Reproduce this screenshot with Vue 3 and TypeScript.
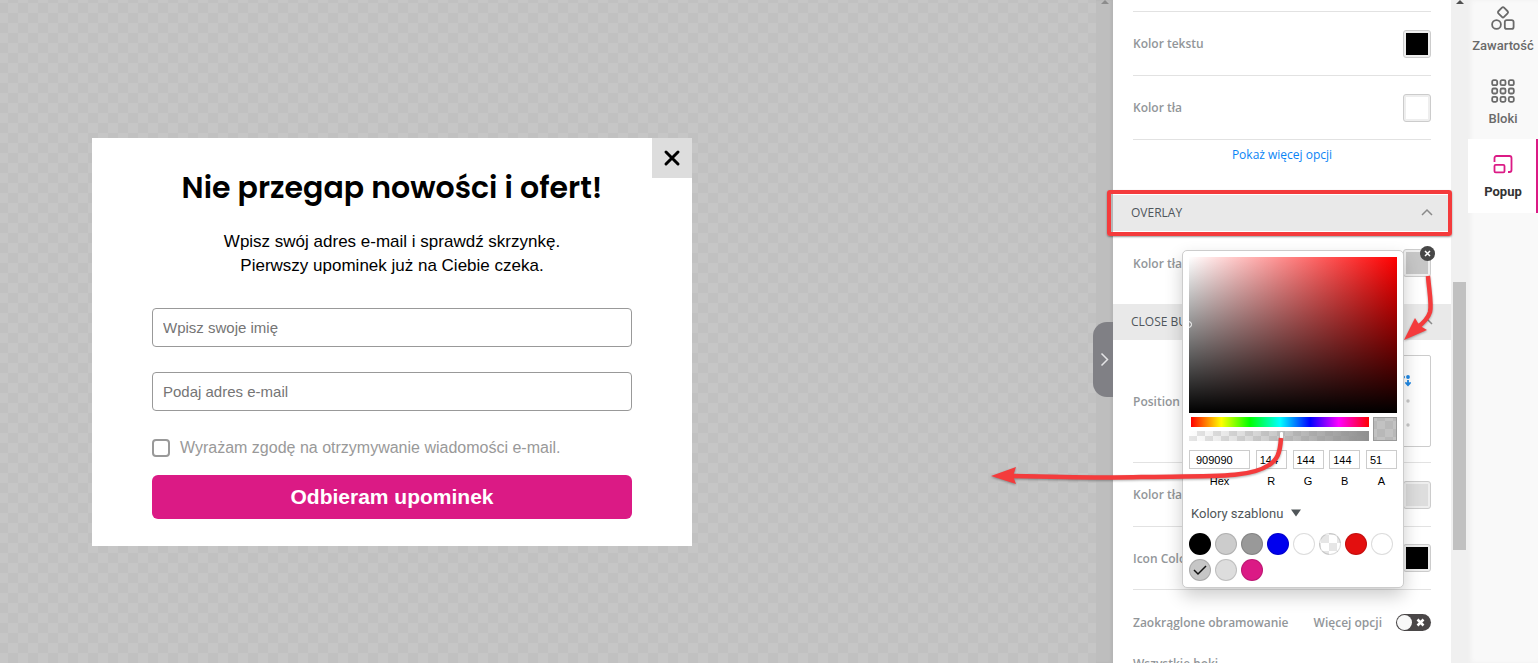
<script setup lang="ts">
import { ref } from 'vue'

interface Channel { id: string; label: string; value: string }
interface Chip { name: string; kind: string }

const tabs = ['Zawartość', 'Bloki', 'Popup']
const active = ref('Popup')
const name = ref('')
const email = ref('')
const consent = ref(false)
const rounded = ref(false)
const channels = ref<Channel[]>([
  { id: 'hex', label: 'Hex', value: '909090' },
  { id: 'r', label: 'R', value: '144' },
  { id: 'g', label: 'G', value: '144' },
  { id: 'b', label: 'B', value: '144' },
  { id: 'a', label: 'A', value: '51' },
])
const chips: Chip[] = [
  { name: 'Czarny', kind: 'black' },
  { name: 'Jasnoszary', kind: 'silver' },
  { name: 'Szary', kind: 'grey' },
  { name: 'Niebieski', kind: 'blue' },
  { name: 'Biały', kind: 'white' },
  { name: 'Przezroczysty', kind: 'clear' },
  { name: 'Czerwony', kind: 'red' },
  { name: 'Biel', kind: 'white' },
  { name: 'Wybrany', kind: 'chosen' },
  { name: 'Popielaty', kind: 'light' },
  { name: 'Różowy', kind: 'pink' },
]
</script>

<template>
  <div class="editor">
    <main class="canvas">
      <section class="popup">
        <button class="popup-close" type="button" aria-label="Zamknij">
          <svg width="18" height="18" viewBox="0 0 18 18"><path d="M3 3l12 12M15 3L3 15" stroke="#000" stroke-width="3" stroke-linecap="round" /></svg>
        </button>
        <h1>Nie przegap nowości i ofert!</h1>
        <p>Wpisz swój adres e-mail i sprawdź skrzynkę.<br />Pierwszy upominek już na Ciebie czeka.</p>
        <form @submit.prevent>
          <input v-model="name" class="field" type="text" placeholder="Wpisz swoje imię" aria-label="Wpisz swoje imię" />
          <input v-model="email" class="field" type="email" placeholder="Podaj adres e-mail" aria-label="Podaj adres e-mail" />
          <label class="consent"><input v-model="consent" type="checkbox" />Wyrażam zgodę na otrzymywanie wiadomości e-mail.</label>
          <button class="submit" type="submit">Odbieram upominek</button>
        </form>
      </section>
    </main>

    <div class="gutter">
      <svg class="gutter-up" width="8" height="4" viewBox="0 0 8 4"><path d="M0 4l4-4 4 4z" fill="#8c8c8c" /></svg>
      <button class="handle" type="button" aria-label="Zwiń panel">
        <svg width="9" height="15" viewBox="0 0 9 15"><path d="M1.500 1.500l6 6-6 6" fill="none" stroke="#e4e4e6" stroke-width="1.500" /></svg>
      </button>
    </div>

    <aside class="panel">
      <div class="row head-row"></div>
      <div class="row"><span>Kolor tekstu</span><button class="swatch" type="button" aria-label="Kolor tekstu"><i class="black"></i></button></div>
      <div class="row"><span>Kolor tła</span><button class="swatch" type="button" aria-label="Kolor tła"><i class="white"></i></button></div>
      <a class="more" href="#">Pokaż więcej opcji</a>
      <button class="section marked" type="button">
        OVERLAY
        <svg width="12" height="8" viewBox="0 0 12 8"><path d="M1 7l5-5 5 5" fill="none" stroke="#8a8a8a" stroke-width="1.500" /></svg>
      </button>
      <div class="row overlay-row">
        <span>Kolor tła</span>
        <div class="swatch-holder">
          <button class="swatch" type="button" aria-label="Kolor tła nakładki"><i class="veil"></i></button>
          <button class="clear-dot" type="button" aria-label="Usuń kolor">
            <svg width="7" height="7" viewBox="0 0 7 7"><path d="M1 1l5 5M6 1L1 6" stroke="#fff" stroke-width="1.500" /></svg>
          </button>
        </div>
      </div>
      <button class="section" type="button">
        CLOSE BUTTON
        <svg width="12" height="8" viewBox="0 0 12 8"><path d="M1 7l5-5 5 5" fill="none" stroke="#8a8a8a" stroke-width="1.500" /></svg>
      </button>
      <div class="row position-row">
        <span>Position</span>
        <div class="position-grid">
          <svg width="90" height="90" viewBox="0 0 90 90">
            <g fill="#1e88e5"><circle cx="63.500" cy="21" r="1.500" /><circle cx="68" cy="21" r="1.900" /><path d="M67.100 24h1.800v2.600l1.900-.6v1.600L68 30.500l-2.800-2.900V26l1.900.6z" /></g>
            <g fill="#c9c9c9"><circle cx="68" cy="45" r="1.700" /><circle cx="68" cy="69" r="1.700" /></g>
          </svg>
        </div>
      </div>
      <div class="row"><span>Kolor tła</span><button class="swatch" type="button" aria-label="Kolor tła przycisku"><i class="light"></i></button></div>
      <div class="row icon-row"><span>Icon Color</span><button class="swatch" type="button" aria-label="Icon Color"><i class="black"></i></button></div>
      <div class="row plain">
        <span>Zaokrąglone obramowanie</span>
        <label class="switch">
          Więcej opcji
          <input v-model="rounded" type="checkbox" />
          <b><svg width="9" height="9" viewBox="0 0 9 9"><path d="M1.500 1.500l6 6M7.500 1.500l-6 6" stroke="#fff" stroke-width="2.500" /></svg></b>
        </label>
      </div>
      <div class="sides">Wszystkie boki</div>

      <div class="picker">
        <div class="spectrum"><i class="cursor"></i></div>
        <div class="bars">
          <div class="tracks">
            <div class="hue"></div>
            <div class="alpha"><i></i></div>
          </div>
          <div class="preview"></div>
        </div>
        <div class="channels">
          <label v-for="c in channels" :key="c.id" :class="c.id"><input v-model="c.value" type="text" />{{ c.label }}</label>
        </div>
        <button class="palette-title" type="button">
          Kolory szablonu
          <svg width="10" height="8" viewBox="0 0 10 8"><path d="M0 .500h10L5 7.500z" fill="#505659" /></svg>
        </button>
        <div class="chips">
          <button v-for="c in chips" :key="c.name" type="button" :class="c.kind" :aria-label="c.name">
            <svg v-if="c.kind === 'chosen'" width="14" height="12" viewBox="0 0 14 12"><path d="M1 6l4 4 8-8" fill="none" stroke="#111" stroke-width="1.500" /></svg>
          </button>
        </div>
      </div>

      <svg class="arrows" width="468" height="260" viewBox="0 0 468 260">
        <g fill="none" stroke="#f43b3c">
          <path d="M447 36C448 50 451 64 449 72C447 79 441 84 436 88" stroke-width="4.500" />
          <path d="M300 198C299 214 296 220 288 225C269 238 235 236 160 237C120 238 70 237 32 236" stroke-width="4.500" />
        </g>
        <g fill="#f43b3c">
          <path d="M423 100L434 78L437 83L441 87L446 90Z" />
          <path d="M10 236L35 227L32 236L35 244Z" />
        </g>
      </svg>
    </aside>

    <div class="scrollbar">
      <svg width="8" height="4" viewBox="0 0 8 4"><path d="M0 4l4-4 4 4z" fill="#505050" /></svg>
      <i></i>
    </div>

    <nav class="tabs">
      <button v-for="t in tabs" :key="t" type="button" :class="{ active: t === active }" @click="active = t">
        <svg v-if="t === 'Zawartość'" width="24" height="24" viewBox="0 0 24 24" fill="none" stroke="#6a6a6a" stroke-width="1.800">
          <rect x="8" y="2.300" width="8" height="8" rx="1.500" transform="rotate(45 12 6.300)" />
          <circle cx="5.500" cy="18.500" r="4.400" /><rect x="13.800" y="14.100" width="8.800" height="8.800" rx="2" />
        </svg>
        <svg v-else-if="t === 'Bloki'" width="24" height="24" viewBox="0 0 24 24" fill="none" stroke="#6a6a6a" stroke-width="1.800">
          <template v-for="y in 3" :key="y"><rect v-for="x in 3" :key="x" :x="x * 8.300 - 7.100" :y="y * 8.300 - 7.100" width="5" height="5" rx="1.500" /></template>
        </svg>
        <svg v-else width="24" height="24" viewBox="0 0 24 24" fill="none" stroke="#db1a85" stroke-width="1.800">
          <path d="M3.500 10V6a2 2 0 0 1 2-2H18.500A2 2 0 0 1 20.500 6v12a2 2 0 0 1-2 2H17" /><rect x="3.500" y="12.800" width="10" height="7.600" rx="1.200" />
        </svg>
        {{ t }}
      </button>
    </nav>
  </div>
</template>

<style>
body { margin: 0; }
</style>

<style scoped>
* { box-sizing: border-box; }
button { border: 0; padding: 0; margin: 0; background: none; font: inherit; color: inherit; cursor: pointer; }
svg { display: block; flex: none; }
.editor { display: flex; height: 100vh; overflow: hidden; font-family: "Open Sans", "Noto Sans", sans-serif; font-size: 12px; color: #929699; background: #fff; }

.canvas { flex: 1; min-width: 0; padding: 138px 92px 0; background: repeating-conic-gradient(#c1c1c1 0 25%, #c6c6c6 0 50%) 8px 3px / 20px 20px; }
.popup { position: relative; max-width: 600px; padding: 28px 60px 27px; background: #fff; color: #000; font-family: "Liberation Sans", Arial, sans-serif; text-align: center; }
.popup-close { position: absolute; top: 0; right: 0; width: 40px; height: 40px; display: grid; place-items: center; background: #ddd; }
h1 { margin: 0 -30px 20px; font: 600 30px/44px Poppins, Inter, sans-serif; }
p { margin: 0 0 30px; font-size: 17px; line-height: 24px; }
form { display: flex; flex-direction: column; }
.field { height: 39px; margin: 0 0 25px; padding: 0 10px; border: 1px solid #999; border-radius: 4px; background: #fff; font: 15px "Liberation Sans", Arial, sans-serif; }
.field::placeholder { color: #757575; opacity: 1; }
.consent { display: flex; align-items: center; gap: 10px; height: 24px; margin-bottom: 15px; font-size: 16px; color: #999; }
.consent input { appearance: none; width: 18px; height: 18px; margin: 0; border: 2px solid #999; border-radius: 4px; background: #fff; }
.submit { height: 44px; border-radius: 6px; background: #db1a85; color: #fff; font-size: 21px; font-weight: 700; }

.gutter { position: relative; flex: none; width: 17px; background: #bebebe; box-shadow: inset -2px 0 3px #b4b4b4; }
.gutter-up { margin: 0 auto; }
.handle { position: absolute; top: 322px; right: 0; width: 20px; height: 75px; padding-left: 7px; border-radius: 14px 0 0 14px; background: #808085; }

.panel { position: relative; flex: none; width: 338px; background: #fff; font-weight: 600; }
.row { display: flex; align-items: center; justify-content: space-between; height: 64px; margin: 0 20px; border-bottom: 1px solid #e2e2e2; }
.head-row { height: 12px; }
.more { display: block; height: 55px; line-height: 29px; text-align: center; color: #0a84f5; text-decoration: none; font-weight: 400; }
.section { position: relative; display: flex; align-items: center; justify-content: space-between; width: 100%; height: 36px; padding: 0 18px 2px; background: #e9e9e9; color: #4f565c; font-weight: 500; }
.marked::after { content: ""; position: absolute; inset: -5px -1px -5px -6px; border: 4px solid #f43b3c; border-radius: 3px; box-shadow: 0 1px 2px #0006; }
.overlay-row { height: 73px; padding-bottom: 9px; border: 0; }
.swatch-holder { position: relative; }
.swatch { display: block; width: 28px; height: 28px; padding: 2px; border: 1px solid #ccc; border-radius: 3px; background: #eee; }
.swatch i { display: block; height: 100%; }
.clear-dot { position: absolute; top: -3px; right: -4px; width: 15px; height: 15px; display: grid; place-items: center; border-radius: 50%; background: #474747; }
.position-row { height: 123px; }
.position-grid { width: 92px; height: 92px; border: 1px solid #ccc; border-radius: 2px; }
.icon-row { height: 63px; }
.plain { border: 0; }
.switch { display: flex; align-items: center; gap: 14px; }
.switch input { position: absolute; opacity: 0; }
.switch b { display: flex; align-items: center; justify-content: space-between; width: 35px; height: 17px; padding: 0 6px 0 1px; border-radius: 9px; background: #4a4748; }
.switch b::before { content: ""; width: 15px; height: 15px; border-radius: 50%; background: #f8f8f8; }
.sides { margin: 0 20px; line-height: 20px; }

.black { background: #000; }
.white { background: #fff; }
.veil { background: #c6c6c6; }
.light { background: #ddd; }
.silver { background: #ccc; }
.grey { background: #999; }
.blue { background: #00e; }
.red { background: #e30f0f; }
.pink { background: #db1a85; }
.chosen { background: #c6c6c6; }
.clear { background: repeating-conic-gradient(#fff 0 25%, #e6e6e6 0 50%) 1px 1px / 16px 16px; }

.picker { position: absolute; top: 250px; left: 69px; width: 222px; padding: 6px; border: 1px solid #ccc; border-radius: 5px; background: #fff; box-shadow: 0 8px 18px #0003; color: #000; font-family: "Liberation Sans", Arial, sans-serif; font-size: 11px; font-weight: 400; }
.spectrum { position: relative; height: 156px; overflow: hidden; background: linear-gradient(to top, #000, #0000), linear-gradient(to right, #fff, #f00); }
.cursor { position: absolute; left: -4px; top: 64px; width: 7px; height: 7px; border: 1px solid #fff; border-radius: 50%; }
.bars { display: flex; gap: 4px; margin-top: 4px; }
.tracks { flex: 1; }
.hue { height: 10px; background: linear-gradient(to right, #f00, #ff0 17%, #0f0 33%, #0ff 50%, #00f 67%, #f0f 83%, #f00); border-left: 2px solid #fff; }
.alpha { position: relative; height: 10px; margin-top: 4px; background: linear-gradient(to right, #90909000, #909090), repeating-conic-gradient(#e6e6e6 0 25%, #fff 0 50%) 0 0 / 16px 10px; }
.alpha i { position: absolute; top: 0; left: 50%; width: 5px; height: 9px; border: 1px solid #bbb; border-radius: 2px; background: #fff; }
.preview { width: 24px; height: 24px; border: 1px solid #999; background: repeating-conic-gradient(#b8b8b8 0 25%, #c2c2c2 0 50%) 3px 3px / 16px 16px; }
.channels { display: grid; grid-template-columns: 61px repeat(4, 31px); justify-content: space-between; margin-top: 9px; text-align: center; line-height: 24px; }
.channels input { display: block; width: 100%; height: 19px; padding: 0 3px; border: 1px solid #ccc; font: 11px "Liberation Sans", Arial, sans-serif; color: #000; background: #fff; }
.hex input { padding-left: 6px; }
.palette-title { display: flex; align-items: center; gap: 8px; height: 20px; margin: 10px 2px; font: 13px Roboto, sans-serif; color: #505659; }
.chips { display: grid; grid-template-columns: repeat(8, 22px); gap: 4px; }
.chips button { display: grid; place-items: center; width: 22px; height: 22px; border: 1px solid #0002; border-radius: 50%; }
.arrows { position: absolute; top: 240px; left: -132px; pointer-events: none; filter: drop-shadow(0 1px 1px #0005); }

.scrollbar { flex: none; width: 17px; display: flex; flex-direction: column; align-items: center; background: #f0f0f0; }
.scrollbar i { width: 13px; height: 268px; margin-top: 278px; background: #c1c1c1; }
.tabs { flex: none; width: 70px; background: #f9f9f9; box-shadow: inset 3px 0 5px #0000000a; font: 500 13px Roboto, sans-serif; color: #6a6a6a; }
.tabs button { display: flex; flex-direction: column; align-items: center; gap: 8px; width: 100%; height: 73px; padding-top: 13px; line-height: 16px; }
.tabs button:first-child { height: 66px; padding-top: 6px; }
.tabs .active { height: 74px; background: #fff; color: #333; font-weight: 700; box-shadow: inset -2px 0 #db1a85; }
</style>
